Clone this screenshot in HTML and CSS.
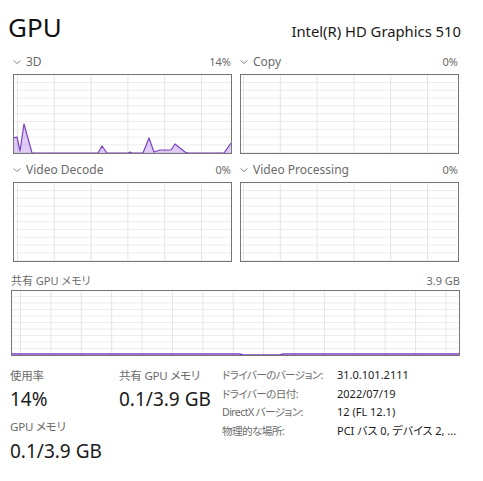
FILE: index.html
```html
<!DOCTYPE html>
<html lang="ja">
<head>
<meta charset="utf-8">
<title>GPU</title>
<link rel="stylesheet" href="styles.css">
</head>
<body>
<div class="page">
  <header class="head">
    <h1 class="title">GPU</h1>
    <div class="device">Intel(R) HD Graphics 510</div>
  </header>

  <section class="engines">
    <div class="engine">
      <div class="elabel">
        <span class="name"><svg class="chev" viewBox="0 0 8 4" width="8" height="4"><path d="M0.5 0.5 L4 3.5 L7.5 0.5" /></svg>3D</span>
        <span class="pct">14%</span>
      </div>
      <div class="chart grid-a">
        <svg class="plot" viewBox="0 0 217 78" preserveAspectRatio="none">
          <path class="area" d="M0 63 L3 62 L6 76 L10 49 L18 78 L84 78 L88 71 L93 78 L114 78 L116 77 L118 78 L129 78 L135 63 L140 77 L143 76 L146 75 L157 75 L161 69 L171 77 L174 78 L210 78 L217 68 L217 78 L0 78 Z" />
          <path class="line" d="M0 63 L3 62 L6 76 L10 49 L18 78 L84 78 L88 71 L93 78 L114 78 L116 77 L118 78 L129 78 L135 63 L140 77 L143 76 L146 75 L157 75 L161 69 L171 77 L174 78 L210 78 L217 68" />
        </svg>
      </div>
    </div>
    <div class="engine">
      <div class="elabel">
        <span class="name"><svg class="chev" viewBox="0 0 8 4" width="8" height="4"><path d="M0.5 0.5 L4 3.5 L7.5 0.5" /></svg>Copy</span>
        <span class="pct">0%</span>
      </div>
      <div class="chart grid-b"></div>
    </div>
    <div class="engine">
      <div class="elabel">
        <span class="name"><svg class="chev" viewBox="0 0 8 4" width="8" height="4"><path d="M0.5 0.5 L4 3.5 L7.5 0.5" /></svg>Video Decode</span>
        <span class="pct">0%</span>
      </div>
      <div class="chart grid-a"></div>
    </div>
    <div class="engine">
      <div class="elabel">
        <span class="name"><svg class="chev" viewBox="0 0 8 4" width="8" height="4"><path d="M0.5 0.5 L4 3.5 L7.5 0.5" /></svg>Video Processing</span>
        <span class="pct">0%</span>
      </div>
      <div class="chart grid-b"></div>
    </div>
  </section>

  <section class="shared">
    <div class="slabel">
      <span>共有 GPU メモリ</span>
      <span>3.9 GB</span>
    </div>
    <div class="chart wide">
      <svg class="plot" viewBox="0 0 448 64" preserveAspectRatio="none">
        <path class="mline" d="M0 63 L228 63 L232 64 L268 64 L272 63 L448 63" />
      </svg>
    </div>
  </section>

  <section class="stats">
    <div class="col c1">
      <div class="k">使用率</div>
      <div class="v">14%</div>
      <div class="k k2">GPU メモリ</div>
      <div class="v v2">0.1/3.9 GB</div>
    </div>
    <div class="col c2">
      <div class="k">共有 GPU メモリ</div>
      <div class="v">0.1/3.9 GB</div>
    </div>
    <dl class="props">
      <dt>ドライバーのバージョン:</dt><dd>31.0.101.2111</dd>
      <dt>ドライバーの日付:</dt><dd>2022/07/19</dd>
      <dt>DirectX バージョン:</dt><dd>12 (FL 12.1)</dd>
      <dt>物理的な場所:</dt><dd>PCI バス 0, デバイス 2, ...</dd>
    </dl>
  </section>
</div>
</body>
</html>
```

FILE: styles.css
```css
html, body {
  margin: 0;
  padding: 0;
  background: #ffffff;
}

body {
  font-family: "Noto Sans", "Noto Sans CJK JP", sans-serif;
  color: #1a1a1a;
  font-feature-settings: "palt";
}

.page {
  width: 483px;
}

.head {
  display: flex;
  justify-content: space-between;
  align-items: baseline;
  padding: 12px 22px 0 8px;
  height: 30px;
}

.title {
  margin: 0;
  font-size: 26px;
  font-weight: 400;
  line-height: 30px;
  color: #111;
}

.device {
  font-size: 14.8px;
  color: #1a1a1a;
}

.engines {
  display: grid;
  grid-template-columns: 219px 219px;
  column-gap: 8px;
  row-gap: 6px;
  padding-left: 13px;
  margin-top: 10px;
}

.elabel {
  display: flex;
  justify-content: space-between;
  align-items: center;
  font-size: 12px;
  line-height: 20px;
  height: 20px;
  color: #6b6b6b;
  margin-bottom: 2px;
}

.pct {
  font-size: 11px;
  padding-right: 1px;
}

.name {
  display: flex;
  align-items: center;
}

.chev {
  width: 8px;
  height: 4px;
  margin-right: 5px;
  fill: none;
  stroke: #7a7a7a;
  stroke-width: 0.9;
}

.chart {
  box-sizing: border-box;
  height: 80px;
  border: 1px solid #767676;
  background-color: #ffffff;
  background-image:
    linear-gradient(to right, #e4e4e4 1px, transparent 1px),
    linear-gradient(to bottom, #ececec 1px, transparent 1px);
  background-size: 36.8px 100%, 100% 7.8px;
}

.grid-a {
  background-position: 3px 0, 0 7px;
}

.grid-b {
  background-position: 2px 0, 0 7px;
}

.plot {
  display: block;
  width: 100%;
  height: 100%;
}

.area {
  fill: rgba(168, 120, 228, 0.38);
  stroke: none;
}

.line {
  fill: none;
  stroke: #7b42c4;
  stroke-width: 1.2;
  stroke-linejoin: round;
}

.shared {
  padding: 0 23px 0 11px;
  margin-top: 11px;
}

.slabel {
  display: flex;
  justify-content: space-between;
  font-size: 11px;
  line-height: 16px;
  color: #6b6b6b;
  margin-bottom: 1px;
}

.wide {
  height: 66px;
  background-size: 30.4px 100%, 100% 6.5px;
  background-position: 8px 0, 0 5px;
}

.mline {
  fill: none;
  stroke: #7b42c4;
  stroke-width: 1.6;
}

.stats {
  display: flex;
  margin-top: 12px;
}

.col {
  display: flex;
  flex-direction: column;
}

.c1 {
  width: 110px;
  padding-left: 10px;
  box-sizing: border-box;
}

.c2 {
  width: 112px;
  padding-left: 9px;
  box-sizing: border-box;
}

.k {
  font-size: 11.5px;
  line-height: 16px;
  height: 16px;
  color: #6b6b6b;
  letter-spacing: -0.2px;
}

.v {
  font-size: 19px;
  line-height: 26px;
  height: 26px;
  margin-top: 2px;
  color: #1a1a1a;
  white-space: nowrap;
}

.k2 {
  margin-top: 7px;
}

.v2 {
  margin-top: 3px;
}

.props {
  display: grid;
  grid-template-columns: 115px auto;
  grid-auto-rows: 18.7px;
  margin: -2px 0 0 0;
  font-size: 11px;
  line-height: 18.7px;
}

.props dt {
  color: #6b6b6b;
  white-space: nowrap;
  font-size: 10.6px;
  letter-spacing: -0.6px;
}

.props dd {
  margin: 0;
  color: #1a1a1a;
  white-space: nowrap;
}
```
